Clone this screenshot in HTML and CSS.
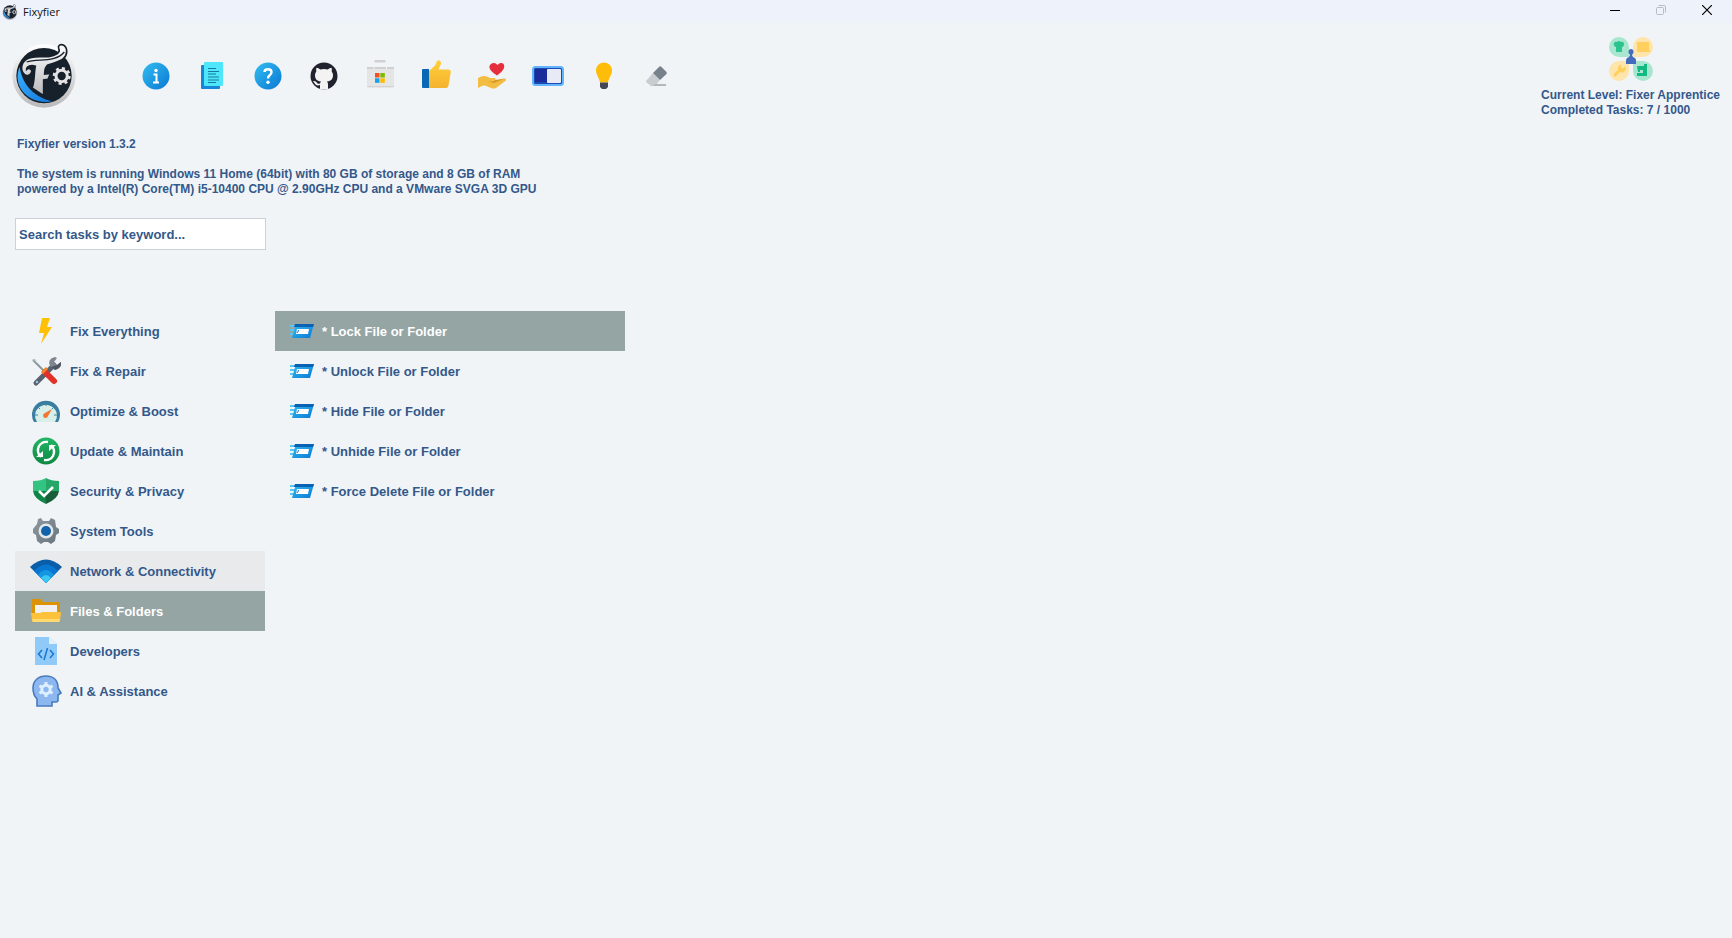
FILE: index.html
```
<!DOCTYPE html>
<html lang="en">
<head>
    <meta charset="UTF-8">
    <meta name="viewport" content="width=device-width, initial-scale=1.0">
    <title>Fixyfier</title>
    <link rel="stylesheet" href="styles.css">
</head>
<body>
    <!-- Shared shapes -->
    <svg class="defs" width="0" height="0" aria-hidden="true">
        <defs>
            <linearGradient id="blue" x1="0" y1="0" x2="1" y2="1">
                <stop offset="0" stop-color="#33bdf0"/><stop offset="1" stop-color="#0a78d4"/>
            </linearGradient>
            <linearGradient id="silver" x1="0" y1="0" x2="0" y2="1">
                <stop offset="0" stop-color="#fff"/><stop offset="1" stop-color="#b9b9bb"/>
            </linearGradient>
            <linearGradient id="swoosh" x1="0" y1="0" x2="1" y2="1">
                <stop offset="0" stop-color="#3bb2ff"/><stop offset="1" stop-color="#1377dc"/>
            </linearGradient>
            <linearGradient id="yellow" x1="0" y1="0" x2="0" y2="1">
                <stop offset="0" stop-color="#ffcf3b"/><stop offset="1" stop-color="#f5b32e"/>
            </linearGradient>
            <linearGradient id="green" x1="0" y1="0" x2="0" y2="1">
                <stop offset="0" stop-color="#23b565"/><stop offset="1" stop-color="#0d8843"/>
            </linearGradient>
            <linearGradient id="steel" x1="0" y1="0" x2="1" y2="1">
                <stop offset="0" stop-color="#8f989e"/><stop offset="1" stop-color="#68757e"/>
            </linearGradient>
        </defs>
        <symbol id="logo" viewBox="36 129 195 195">
            <circle cx="132" cy="228" r="95" fill="url(#silver)"/>
            <circle cx="132" cy="227" r="83" fill="#17212c"/>
            <path d="M59 201C66 250 98 290 156 304C118 311 79 295 63 267C50 245 50 221 59 201Z" fill="url(#swoosh)"/>
            <path d="M74 224C60 214 62 190 78 179C98 165 124 172 146 170C166 167 183 158 176 145C173 137 181 131 190 135C204 143 203 165 190 176C176 187 155 190 142 196C136 202 134 212 134 222L152 220L144 238L131 240V287L96 264C104 246 102 214 106 199C94 194 80 198 80 208C86 202 97 207 95 216C92 226 82 229 74 224Z" fill="url(#silver)" stroke="#17212c" stroke-width="5"/>
            <path d="M80 186C112 174 164 190 193 156" fill="none" stroke="#17212c" stroke-width="4"/>
            <circle cx="185" cy="228" r="17" fill="none" stroke="#e3e3e5" stroke-width="9"/>
            <circle cx="185" cy="228" r="23" fill="none" stroke="#e3e3e5" stroke-width="8" stroke-dasharray="9 9.060"/>
        </symbol>
        <symbol id="run" viewBox="0 0 24 14">
            <path d="M0 1H7V3H0ZM0 5H6V7H0ZM0 9H5V11H0Z" fill="#54c9f4"/>
            <path d="M6 0H24L20 14H2Z" fill="url(#blue)"/>
            <path d="M5 0H24L23 3H4Z" fill="#0b62b2"/>
            <path d="M7 5H19L18 10H6Z" fill="#fff"/>
            <path d="M9 6L7 9" stroke="#1675c4"/>
        </symbol>
    </svg>

    <!-- Window title bar -->
    <div class="titlebar">
        <svg class="titlebar-logo" width="16" height="16"><use href="#logo"/></svg>
        <span class="titlebar-name">Fixyfier</span>
        <div class="window-buttons">
            <button type="button" aria-label="Minimize">
                <svg width="10" height="10" viewBox="0 0 10 10"><path d="M0 5.5H10" stroke="#000"/></svg>
            </button>
            <button type="button" aria-label="Restore" disabled>
                <svg width="10" height="10" viewBox="0 0 10 10" fill="none" stroke="#b9bcc2"><rect x=".5" y="2.5" width="7" height="7" rx="1"/><path d="M2.5 .5H8Q9.500 .5 9.500 2V7.500"/></svg>
            </button>
            <button type="button" aria-label="Close">
                <svg width="10" height="10" viewBox="0 0 10 10"><path d="M0 0L10 10M10 0L0 10" stroke="#000" stroke-width="1.2"/></svg>
            </button>
        </div>
    </div>

    <!-- Logo, toolbar and level -->
    <header class="header">
        <svg class="logo" width="65" height="65" role="img" aria-label="Fixyfier logo"><use href="#logo"/></svg>

        <div class="toolbar">
            <button type="button" aria-label="About">
                <svg viewBox="0 0 32 32"><circle cx="16" cy="16" r="13.500" fill="url(#blue)"/><circle cx="16" cy="10.500" r="1.700" fill="#fff"/><path d="M13.500 14.500H16.500V22M13 22.500H19" stroke="#fff" stroke-width="2" fill="none"/></svg>
            </button>
            <button type="button" aria-label="Changelog">
                <svg viewBox="0 0 32 32"><path d="M5 6Q5 5 6 5H20V29H6Q5 29 5 28ZM8 26H24V28Q24 29 23 29H8Z" fill="#1586d8"/><rect x="8" y="2" width="19" height="24" rx="1" fill="#4ee6fb"/><path d="M12 8.500H20M12 11.500H23M12 14H20M12 17H23M12 20H23M12 22.500H20" stroke="#147d9e" stroke-width="1.200"/></svg>
            </button>
            <button type="button" aria-label="Help">
                <svg viewBox="0 0 32 32"><circle cx="16" cy="16" r="13.500" fill="url(#blue)"/><path d="M12.500 12Q12.500 9.300 16 9.300Q19.500 9.300 19.500 12.300Q19.500 14 17.700 15.200Q16 16.300 16 18.500" fill="none" stroke="#fff" stroke-width="2.400"/><circle cx="16" cy="22.300" r="1.700" fill="#fff"/></svg>
            </button>
            <button type="button" aria-label="GitHub">
                <svg viewBox="0 0 32 32"><circle cx="16" cy="16" r="13.500" fill="#20222e"/><path d="M12 29V25C9 26 7.500 25 6.500 23Q5.800 22 5 21.300C7 20.500 8.500 22 9.300 23.200Q10.500 24.200 12.200 23.200Q12.300 22.200 13 21.500C8.500 21 7 18.500 7 15Q7 13 8.300 11.500Q7.800 9.500 8.500 7.800Q10.500 7.800 12.300 9.400Q16 8.500 19.700 9.400Q21.500 7.800 23.500 7.800Q24.200 9.500 23.700 11.500Q25 13 25 15C25 18.500 23.500 21 19 21.500Q20 22.600 20 24.500V29Q16 30 12 29Z" fill="#f3f3f3"/></svg>
            </button>
            <button type="button" aria-label="Microsoft Store">
                <svg viewBox="0 0 32 32"><path d="M3 9H30V26Q30 28 28 28H5Q3 28 3 26Z" fill="#e5e5e5"/><path d="M10.500 0H21.500V2.500H10.500ZM3 7H9.500V9H3ZM10.500 7H22V9H10.500ZM23 7H30V9H23Z" fill="#cfd0d1"/><path d="M3 26.500H30" stroke="#d3d3d3"/><path fill="#f25022" d="M11 13H15.500V17.500H11Z"/><path fill="#7fba00" d="M16.300 13H20.800V17.500H16.300Z"/><path fill="#14a1ed" d="M11 18.300H15.500V22.800H11Z"/><path fill="#ffb900" d="M16.300 18.300H20.800V22.800H16.300Z"/></svg>
            </button>
            <button type="button" aria-label="Like">
                <svg viewBox="0 0 32 32"><path d="M9 11L15 5.500L17 1Q19-.5 20.500 1.500Q21.500 3 20.500 5L18.500 9.500H29Q31 10 30.800 12L28.500 25.500Q28 28 26 28H9Z" fill="url(#yellow)"/><path d="M2 10Q2 9 3 9H9V28H3Q2 28 2 27Z" fill="#0868b6"/></svg>
            </button>
            <button type="button" aria-label="Donate">
                <svg viewBox="0 0 32 32"><path d="M21 15.500C9 8 14 3 18 3Q20 3 21.500 5Q23 3 25 3C29 3 31 9 21 15.500Z" fill="#e52f3d"/><path d="M2 18Q8 14 14 18H19Q20.500 20 18 21.500L29 18.500Q30.500 19 30 20.500L20 28Q18 29 15 28L9 25.500Q6 25 2 28Z" fill="#f3bd43"/><path d="M12 21.500Q18 22 19 20L29 18.500L18 23Z" fill="#d79825"/></svg>
            </button>
            <button type="button" aria-label="Toggle theme">
                <svg viewBox="0 0 32 32"><rect x="1" y="7" width="30" height="18" rx="2.500" fill="#1a48b5" stroke="#63b5fb" stroke-width="2"/><path d="M3 9H15V22H3Z" fill="#192c99"/><rect x="15" y="9" width="14" height="14" rx="1" fill="#e8eaf5"/></svg>
            </button>
            <button type="button" aria-label="Suggestions">
                <svg viewBox="0 0 32 32"><path d="M16 2.500C11 2.500 8 6.500 8 10.500C8 15 11 17 12 22.500H20C21 17 24 15 24 10.500C24 6.500 21 2.500 16 2.500Z" fill="#ffbd09"/><path d="M12 22.500H20V27L18 29H14L12 27Z" fill="#454854"/></svg>
            </button>
            <button type="button" aria-label="Clear">
                <svg viewBox="0 0 32 32"><path d="M2 21L9 13L16 20L11 26H7L2 22Z" fill="#c9ccd0"/><path d="M9 13L15.500 6.500Q16.500 6 17.500 7L22.500 12Q23 13 22.500 14L16 20Z" fill="#77818c"/><path d="M11 24H22V26H9Z" fill="#b1b7bc"/></svg>
            </button>
        </div>

        <div class="level">
            <svg class="level-icon" width="44" height="44" viewBox="0 0 44 44">
                <path d="M10 0A10 10 0 0 0 10 20H20V10A10 10 0 0 0 10 0ZM34 44A10 10 0 0 0 34 24H24V34A10 10 0 0 0 34 44Z" fill="#a9e6cf"/>
                <path d="M34 0A10 10 0 0 1 34 20H24V10A10 10 0 0 1 34 0ZM10 44A10 10 0 0 1 10 24H20V34A10 10 0 0 1 10 44Z" fill="#ffe5ab"/>
                <path d="M7 15V10Q4 9 5 6Q6 4 8 5Q10 3 12 5Q15 4 15 7Q15 10 13 10V15Z" fill="#2bc48f"/>
                <path d="M28 5H40V13H41V15H28V13H28Z" fill="#ffd05e"/>
                <path d="M6 38L12 32" stroke="#ffd05e" stroke-width="3" stroke-linecap="round"/>
                <path d="M16 29A4 4 0 1 1 12 27.500V31H15Z" fill="#ffd05e"/>
                <path d="M28 29H38V39H28V36H34V33H31V35H29ZM35 27H38V29H35Z" fill="#12b982"/>
                <path d="M17 27V23Q17 21 20 20L21 18Q19 16 19.500 14Q20 12 22 12Q24 12 24.500 14Q25 16 23 18L24 20Q27 21 27 23V27Z" fill="#466bbb"/>
            </svg>
            <p>Current Level: Fixer Apprentice<br>Completed Tasks: 7 / 1000</p>
        </div>
    </header>

    <!-- System info and search -->
    <section class="info">
        <p>Fixyfier version 1.3.2</p>
        <p>The system is running Windows 11 Home (64bit) with 80 GB of storage and 8 GB of RAM<br>powered by a Intel(R) Core(TM) i5-10400 CPU @ 2.90GHz CPU and a VMware SVGA 3D GPU</p>
        <input class="search" type="text" aria-label="Search tasks" placeholder="Search tasks by keyword...">
    </section>

    <main class="main">
        <nav class="categories">
            <button type="button">
                <svg viewBox="0 0 32 32"><path d="M12 3H20L17 12H22L11 29L14 18H9Z" fill="#ffc107"/></svg>
                Fix Everything
            </button>
            <button type="button">
                <svg viewBox="0 0 32 32"><path d="M6 28L24 10" stroke="#59636f" stroke-width="5" stroke-linecap="round"/><path d="M20 11Q17 4 25 2L27 3L24 7L27 10L31 7Q32 13 25 15Z" fill="#7f868f"/><path d="M31 7Q32 13 25 15L21 12L24 11L27 10Z" fill="#505762"/><path d="M3 5L14 16" stroke="#8b969d" stroke-width="2"/><path d="M2 4L5 4L7 8Z" fill="#b3c0c5"/><path d="M15 17L24 26" stroke="#e23228" stroke-width="6" stroke-linecap="round"/><path d="M12 18L17 13" stroke="#f3842c" stroke-width="3"/><circle cx="7" cy="27" r="1.200" fill="#9cc5ee"/></svg>
                Fix &amp; Repair
            </button>
            <button type="button">
                <svg viewBox="0 0 32 32"><path d="M4 27A14 14 0 1 1 28 27Z" fill="#397da0"/><path d="M7 27A11 11 0 1 1 25 27Z" fill="#d8efe9"/><path d="M16 8V11M8 12L10 14M24 12L22 14M5 20H8M24 20H27M11 9L12 11M21 9L20 11" stroke="#3d839c"/><path d="M22 14L18 21A2.500 2.500 0 1 1 15 18Z" fill="#f27532"/></svg>
                Optimize &amp; Boost
            </button>
            <button type="button">
                <svg viewBox="0 0 32 32"><circle cx="16" cy="16" r="13.500" fill="url(#green)"/><path d="M18 7Q12 6 9 11Q6 17 11 22M14 25Q20 26 23 21Q26 15 21 10" fill="none" stroke="#fff" stroke-width="2.400"/><path d="M6 22H13V16ZM26 10H19V16Z" fill="#fff"/></svg>
                Update &amp; Maintain
            </button>
            <button type="button">
                <svg viewBox="0 0 32 32"><path d="M16 3Q21 6 29 6V16H16Z" fill="#25a768"/><path d="M16 3Q11 6 3 6V16H16Z" fill="#33c481"/><path d="M3 16H16V29Q4 24 3 16Z" fill="#108548"/><path d="M29 16H16V29Q28 24 29 16Z" fill="#175f38"/><path d="M9 16L14 21L23 12" fill="none" stroke="#fff" stroke-width="2.600"/></svg>
                Security &amp; Privacy
            </button>
            <button type="button">
                <svg viewBox="0 0 32 32"><path d="M13 6L11 3L8 4L7 9L3 14L3 18L6 20L7 26L11 29L14 27H18L21 29L25 26L26 20L29 18V14L26 12L25 5L21 3L19 6Z" fill="url(#steel)"/><circle cx="16" cy="16" r="7.500" fill="#e5e8eb"/><circle cx="16" cy="16" r="5" fill="#1262aa"/></svg>
                System Tools
            </button>
            <button type="button" class="hovered">
                <svg viewBox="0 0 32 32"><path d="M0 12Q16-3 32 12L16 28Z" fill="#0a5da8"/><path d="M4 16Q16 3 28 16L16 28Z" fill="#0877d1"/><path d="M8 20Q16 10 24 20L16 28Z" fill="#1696e0"/><path d="M11 23Q16 17 21 23L16 28Z" fill="#3bc6f4"/></svg>
                Network &amp; Connectivity
            </button>
            <button type="button" class="selected">
                <svg viewBox="0 0 32 32"><path d="M2 5Q2 4 3 4H11L13 7H29Q30 7 30 8V26H2Z" fill="#db9205"/><path d="M5 10H27V20H5Z" fill="#f1f0ef"/><path d="M1 18H10L12 17H31L30 26Q30 27 29 27H3Q2 27 2 26Z" fill="#fdc23c"/><path d="M2 24H30L29 27H3Z" fill="#ffda70"/></svg>
                Files &amp; Folders
            </button>
            <button type="button">
                <svg viewBox="0 0 32 32"><path d="M5 2H19L27 9V30H5Z" fill="#90caf9"/><path d="M19 2L27 9H19Z" fill="#e1f2fd"/><path d="M12 15L8.500 19L12 23M20 15L23.500 19L20 23M17.500 13L14 25" fill="none" stroke="#1976d2" stroke-width="1.500"/></svg>
                Developers
            </button>
            <button type="button">
                <svg viewBox="0 0 32 32"><path d="M7 31V24Q3 20 3 13C3 5 9 1 16 1C24 1 28 6 28 13L31 18L28 20V25Q28 27 26 27H22V31Z" fill="#8db8ef" stroke="#477bbd" stroke-width="1.600"/><circle cx="16" cy="14.500" r="4.200" fill="none" stroke="#deefff" stroke-width="3"/><path d="M16 7V10M16 19V22M9.500 10.750L12 12.250M20 16.750L22.500 18.250M22.500 10.750L20 12.250M12 16.750L9.500 18.250" stroke="#deefff" stroke-width="3"/></svg>
                AI &amp; Assistance
            </button>
        </nav>

        <div class="tasks">
            <button type="button" class="selected"><svg><use href="#run"/></svg>* Lock File or Folder</button>
            <button type="button"><svg><use href="#run"/></svg>* Unlock File or Folder</button>
            <button type="button"><svg><use href="#run"/></svg>* Hide File or Folder</button>
            <button type="button"><svg><use href="#run"/></svg>* Unhide File or Folder</button>
            <button type="button"><svg><use href="#run"/></svg>* Force Delete File or Folder</button>
        </div>
    </main>
</body>
</html>
```
FILE: styles.css
```
* {
    box-sizing: border-box;
}

body {
    margin: 0;
    min-height: 100vh;
    background: #f0f4f7;
    color: #34588a;
    font-family: "Liberation Sans", Arial, sans-serif;
    font-size: 12px;
    font-weight: bold;
    line-height: 15px;
}

p {
    margin: 0;
}

button {
    border: none;
    background: none;
    padding: 0;
    color: inherit;
    font: inherit;
    cursor: pointer;
}

/* display: none would switch the gradients off */
.defs {
    position: absolute;
}

/* Title bar */
.titlebar {
    display: flex;
    align-items: center;
    height: 23px;
    padding-left: 2px;
    background: #eef3fb;
    color: #111;
    font-family: "Open Sans", sans-serif;
    font-size: 11px;
    font-weight: normal;
}

.titlebar-name {
    margin-left: 5px;
}

.window-buttons {
    display: flex;
    margin-left: auto;
    height: 100%;
    padding: 0 2px 3px 0;
}

.window-buttons button {
    display: flex;
    align-items: center;
    justify-content: center;
    width: 46px;
}

.window-buttons button:hover {
    background: #dde3ec;
}

/* Header */
.header {
    display: flex;
    align-items: flex-start;
    padding: 14px 12px 0;
}

.logo {
    margin-top: 6px;
}

.toolbar {
    display: flex;
    margin: 23px 0 0 51px;
}

.toolbar button {
    display: flex;
    justify-content: center;
    width: 56px;
}

.toolbar svg {
    width: 32px;
    height: 32px;
}

.level {
    display: flex;
    flex-direction: column;
    align-items: center;
    gap: 7px;
    margin-left: auto;
}

/* System info */
.info {
    display: flex;
    flex-direction: column;
    gap: 15px;
    padding: 19px 15px 0;
}

.info p {
    padding-left: 2px;
}

.search {
    width: 251px;
    height: 32px;
    margin-top: 6px;
    padding: 0 3px;
    border: 1px solid #cbd0d9;
    background: #fff;
    color: #34588a;
    font: inherit;
    font-size: 13px;
}

.search::placeholder {
    color: #34588a;
    opacity: 1;
}

/* Category and task lists */
.main {
    display: flex;
    align-items: flex-start;
    gap: 10px;
    padding: 61px 15px 0;
    font-size: 13px;
}

.categories,
.tasks {
    display: flex;
    flex-direction: column;
}

.categories {
    width: 250px;
}

.tasks {
    width: 350px;
}

.main button {
    display: flex;
    align-items: center;
    gap: 8px;
    height: 40px;
    padding-left: 15px;
    text-align: left;
}

.categories svg {
    width: 32px;
    height: 32px;
}

.tasks svg {
    width: 24px;
    height: 14px;
}

.main button.hovered,
.main button:hover {
    background: #e8eaec;
}

.main button.selected {
    background: #95a5a4;
    color: #fff;
}
```
